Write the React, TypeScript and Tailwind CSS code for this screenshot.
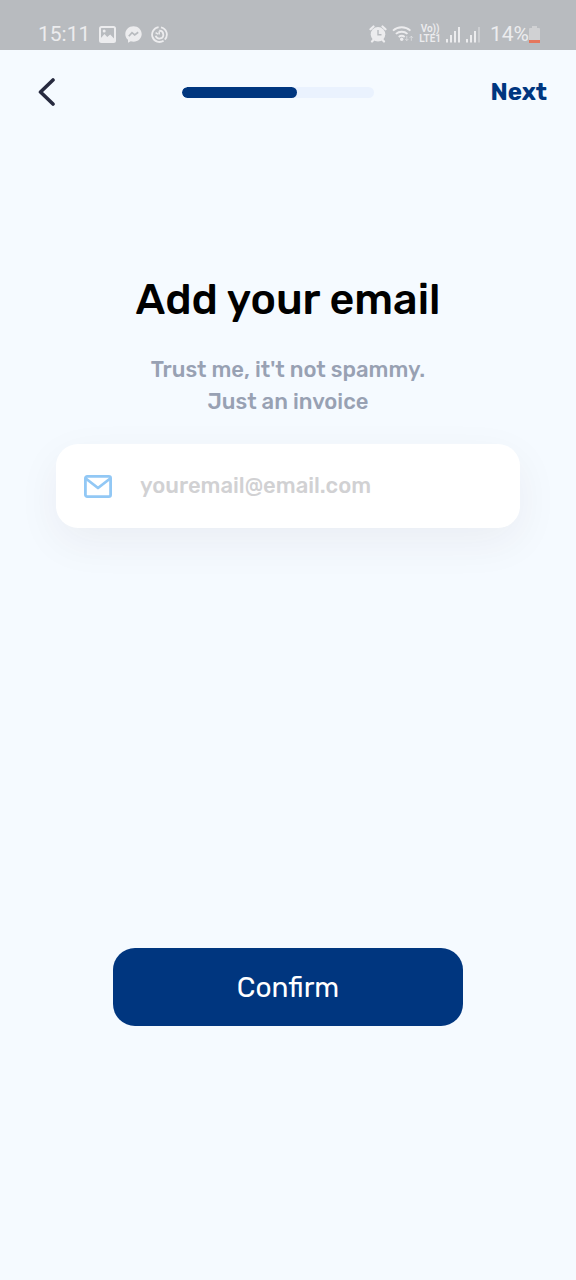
import { useState } from "react";

function ImageIcon() {
  return (
    <svg className="size-[17px]" viewBox="0 0 17 17" fill="none" aria-hidden="true">
      <rect x="1" y="1" width="15" height="15" rx="1.5" stroke="currentColor" strokeWidth="2" />
      <path d="M1.500 12.500l4-4.500 2.700 3 3-2.500 4.300 4.500v3h-14z" fill="currentColor" />
      <circle cx="5.200" cy="5" r="1.500" fill="currentColor" />
    </svg>
  );
}

function MessengerIcon() {
  return (
    <svg className="size-[17px]" viewBox="0 0 17 17" aria-hidden="true">
      <path
        d="M8.5.3C3.8.3.3 3.700.3 8c0 2.400 1 4.400 2.700 5.800v2.900l2.700-1.400c.9.300 1.800.4 2.800.4 4.700 0 8.200-3.400 8.200-7.700S13.200.3 8.500.3z"
        fill="currentColor"
      />
      <path d="M3.800 10.200l3.200-3.500 2.700 2.200 3.500-2.600" fill="none" stroke="#b8bbbf" strokeWidth="1.700" />
    </svg>
  );
}

function SwirlIcon() {
  return (
    <svg className="size-[17px]" viewBox="0 0 17 17" fill="none" stroke="currentColor" strokeWidth="1.800" aria-hidden="true">
      <path d="M10 1.300a7.400 7.400 0 0 1 3.800 12.300" />
      <path d="M12.600 14.700A7.400 7.400 0 1 1 7.600 1.200" />
      <path d="M8.200 4.700a3.900 3.900 0 1 1-3.500 5.100" />
      <path d="M8.200 8.500V5.200M4.600 6.600l2.400 1.600" strokeWidth="1.500" />
    </svg>
  );
}

function AlarmIcon() {
  return (
    <svg className="size-[18px]" viewBox="0 0 18 18" fill="none" aria-hidden="true">
      <circle cx="9" cy="9.300" r="7.300" fill="currentColor" />
      <path d="M1.500 4.300L4.500 1.500M16.500 4.300l-3-2.800M3 16.500l2-2.300M15 16.500l-2-2.300" stroke="currentColor" strokeWidth="2.200" strokeLinecap="round" />
      <path d="M9 5v4.700h3.500" stroke="#b8bbbf" strokeWidth="1.400" />
    </svg>
  );
}

function WifiIcon() {
  return (
    <svg className="h-[18px] w-[22px]" viewBox="0 0 22 18" fill="none" stroke="currentColor" strokeWidth="1.900" aria-hidden="true">
      <path d="M1 5.600a13 13 0 0 1 17.400 0M3.900 8.900a8.700 8.700 0 0 1 11.600 0M6.700 12a4.800 4.800 0 0 1 6 0" />
      <circle cx="9.700" cy="14.300" r="1.700" fill="currentColor" stroke="none" />
      <path d="M14.800 11v4.500m-1.700-1.600l1.700 1.700 1.700-1.700M19.300 15.800v-4.500m-1.700 1.600l1.700-1.700 1.700 1.700" strokeWidth="1" opacity="0.600" />
    </svg>
  );
}

function SignalIcon({ weak }: { weak?: boolean }) {
  return (
    <svg className="h-[17px] w-[15px]" viewBox="0 0 15 17" fill="currentColor" aria-hidden="true">
      <rect x="0" y="13" width="2" height="3.500" />
      <rect x="4" y="9" width="2" height="7.500" />
      <rect x="8" y="5" width="2" height="11.500" />
      <rect x="12" y="1" width="2" height="15.500" opacity={weak ? 0.4 : 1} />
    </svg>
  );
}

function BatteryIcon() {
  return (
    <svg className="h-[17px] w-[11px]" viewBox="0 0 11 17" aria-hidden="true">
      <path d="M3 0h5v2h2a1 1 0 0 1 1 1v14H0V3a1 1 0 0 1 1-1h2z" fill="#d0d1d3" />
      <path d="M0 14h11v3H0z" fill="#e5765c" />
    </svg>
  );
}

function StatusBar() {
  return (
    <div className="flex h-[50px] items-center justify-between bg-[#b8bbbf] pr-9 pl-[38px] pt-[18px] font-['Roboto',sans-serif] text-[#ececee]">
      <div className="flex items-center gap-[9px]">
        <span className="text-[21px] leading-6">15:11</span>
        <ImageIcon />
        <MessengerIcon />
        <SwirlIcon />
      </div>
      <div className="flex items-center gap-[5px]">
        <AlarmIcon />
        <WifiIcon />
        <span className="flex flex-col items-center text-[10px] leading-[10px] font-semibold">
          <span>Vo))</span>
          <span>LTE1</span>
        </span>
        <SignalIcon />
        <SignalIcon weak />
        <span className="flex items-center pl-1">
          <span className="text-[21px] leading-6">14%</span>
          <BatteryIcon />
        </span>
      </div>
    </div>
  );
}

function Header() {
  return (
    <header className="flex h-[84px] items-center justify-between px-[29px]">
      <button type="button" aria-label="Back" className="flex h-10 w-9 items-center justify-center text-[#272a3f]">
        <svg className="h-[28px] w-[18px]" viewBox="0 0 18 28" fill="none" stroke="currentColor" strokeWidth="3.600" strokeLinecap="round" strokeLinejoin="round" aria-hidden="true">
          <path d="M15 2L2.500 14 15 26" />
        </svg>
      </button>
      <div
        role="progressbar"
        aria-label="Sign-up progress"
        aria-valuenow={60}
        aria-valuemin={0}
        aria-valuemax={100}
        className="h-[11px] w-48 overflow-hidden rounded-full bg-[#eaf2fe]"
      >
        <div className="h-full w-3/5 rounded-full bg-[#00367f]" />
      </div>
      <button type="button" className="text-[24px] leading-8 font-bold text-[#00367f]">
        Next
      </button>
    </header>
  );
}

export default function App() {
  const [email, setEmail] = useState("");

  return (
    <div className="flex min-h-screen flex-col bg-[#f5faff] font-['Rubik','Roboto',sans-serif]">
      <StatusBar />
      <Header />
      <main>
        <form className="flex flex-col items-center px-14 pt-[138px]" onSubmit={(event) => event.preventDefault()}>
          <h1 className="text-center text-[43px] leading-[56px] font-medium text-black">Add your email</h1>
          <p className="mt-[26px] text-center text-[22px] leading-8 font-medium text-[#98a1b3]">
            Trust me, it't not spammy.
            <br />
            Just an invoice
          </p>
          <label className="mt-[26px] flex h-[84px] w-full items-center gap-[28px] rounded-[22px] bg-white px-7 shadow-[0_14px_44px_rgba(60,40,50,0.06)]">
            <svg className="h-[23px] w-[28px] shrink-0 text-[#92c8f5]" viewBox="0 0 28 23" fill="none" stroke="currentColor" strokeWidth="2.800" strokeLinejoin="round" aria-hidden="true">
              <rect x="1.400" y="1.400" width="25.200" height="20.200" rx="1.800" />
              <path d="M1.800 3.500L14 13 26.200 3.500" />
            </svg>
            <input
              type="email"
              aria-label="Email address"
              value={email}
              onChange={(event) => setEmail(event.target.value)}
              placeholder="youremail@email.com"
              className="w-full min-w-0 bg-transparent text-[22px] leading-8 font-medium text-[#272a3f] outline-none placeholder:text-[#d1d1d3]"
            />
          </label>
          <button
            type="submit"
            className="mt-[420px] h-[78px] w-full max-w-[350px] rounded-[22px] bg-[#00367f] pt-[2px] text-[28px] leading-9 text-white"
          >
            Confirm
          </button>
        </form>
      </main>
    </div>
  );
}
